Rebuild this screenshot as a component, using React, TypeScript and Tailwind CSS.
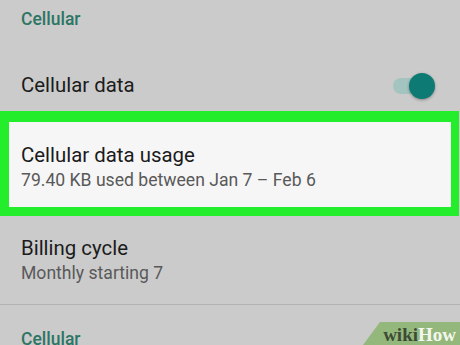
const SubRow = ({ title, sub }: { title: string; sub: string }) => (
  <div className="flex flex-col">
    <span className="text-[20.4px] leading-[26px] text-[#1b1b1b]">{title}</span>
    <span className="mt-[1px] text-[17.6px] leading-[22px] text-[#595959]">{sub}</span>
  </div>
)

const App = () => {
  return (
    <div
      className="relative h-[345px] w-[460px] overflow-hidden bg-[#cbcbcb]"
      style={{ fontFamily: 'Roboto, "Noto Sans", sans-serif' }}
    >
      <div className="pl-[21px] pt-[7px] text-[17.5px] font-medium leading-[24px] text-[#2d7565]">Cellular</div>

      <div className="mt-[40px] flex items-center justify-between pl-[21px] pr-[25px]">
        <span className="text-[20.4px] leading-[28px] text-[#1b1b1b]">Cellular data</span>
        <div className="relative mt-[2px] flex h-[26px] w-[44px] items-center">
          <div className="ml-[2px] h-[16px] w-[36px] rounded-full bg-[#a4c4bf]" />
          <div className="absolute right-0 top-0 h-[26px] w-[26px] rounded-full bg-[#0d7b73] shadow-[0_1px_3px_rgba(0,0,0,0.35)]" />
        </div>
      </div>

      <div className="mt-[12px] mr-[1px] border-[#24ee2c] border-t-[11px] border-l-[9px] border-r-[8px] border-b-[9px]">
        <div className="bg-[#f6f6f6] pb-[16px] pl-[12px] pt-[20px]">
          <SubRow title="Cellular data usage" sub="79.40 KB used between Jan 7 – Feb 6" />
        </div>
      </div>

      <div className="mt-[19px] pl-[21px]">
        <SubRow title="Billing cycle" sub="Monthly starting 7" />
      </div>

      <div className="mt-[20px] h-px bg-[#b2b2b2]" />

      <div className="mt-[22px] pl-[21px] text-[17.5px] font-medium leading-[24px] text-[#2d7565]">Cellular</div>

      <div className="absolute bottom-0 right-0 flex h-[23px] w-[97px] items-center justify-end pr-[4px]">
        <div className="absolute inset-0 bg-[#94b87c] [clip-path:polygon(17px_0,100%_0,100%_100%,0_100%)]" />
        <span
          className="relative pt-[2px] text-[19px] font-bold leading-none"
          style={{ fontFamily: '"Liberation Serif", "DejaVu Serif", serif' }}
        >
          <span className="text-[#3d4a35]">wiki</span>
          <span className="text-[#f4f7ee]">How</span>
        </span>
      </div>
    </div>
  )
}

export default App
